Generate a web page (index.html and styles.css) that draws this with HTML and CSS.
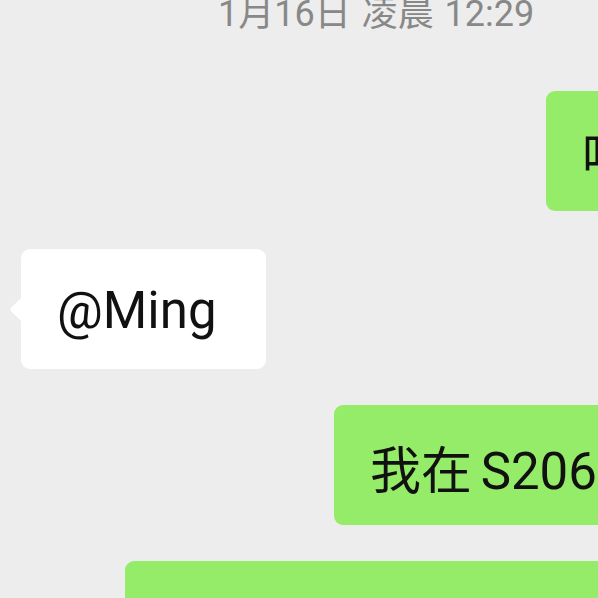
FILE: index.html
```html
<!DOCTYPE html>
<html lang="zh-CN">
<head>
<meta charset="utf-8">
<link rel="stylesheet" href="styles.css">
</head>
<body>
<div class="chat">
  <div class="time">1月16日 凌晨 12:29</div>
  <div class="row out r1"><div class="bubble green">哈哈哈哈哈</div></div>
  <div class="row in r2"><div class="bubble white">@Ming<span class="tail"></span></div></div>
  <div class="row out r3"><div class="bubble green">我在 S206 教室等你</div></div>
  <div class="row out r4"><div class="bubble green">好的好的，马上就到了哈哈哈</div></div>
</div>
</body>
</html>
```
FILE: styles.css
```css
html, body {
  margin: 0;
  padding: 0;
  background: #ededed;
}
body {
  width: 598px;
  height: 598px;
  overflow: hidden;
  font-family: Roboto, "Noto Sans CJK SC", sans-serif;
}
.chat {
  display: flex;
  flex-direction: column;
}
.time {
  padding-left: 218px;
  font-size: 36px;
  line-height: 36px;
  height: 30px;
  color: #888888;
  white-space: nowrap;
  margin-top: -4px;
  word-spacing: 2px;
}
.row {
  display: flex;
  white-space: nowrap;
}
.r1 { margin-top: 65px; padding-left: 546px; }
.r2 { margin-top: 38px; padding-left: 21px; }
.r3 { margin-top: 36px; padding-left: 334px; }
.r4 { margin-top: 36px; padding-left: 125px; }
.bubble {
  position: relative;
  flex-shrink: 0;
  height: 120px;
  box-sizing: border-box;
  padding: 3px 36px 0 36px;
  display: flex;
  align-items: center;
  font-size: 51px;
  color: #111;
  border-radius: 9px;
}
.green { background: #95ec69; word-spacing: -4px; }
.white { background: #ffffff; padding-right: 49px; }
.tail {
  position: absolute;
  left: -8px;
  top: 50%;
  width: 17px;
  height: 17px;
  margin-top: -8px;
  background: #ffffff;
  transform: rotate(45deg);
  border-radius: 2px;
}
```
